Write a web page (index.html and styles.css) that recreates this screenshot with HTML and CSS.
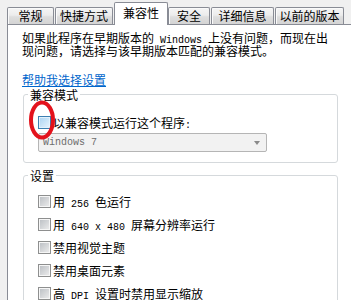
FILE: index.html
```html
<!DOCTYPE html>
<html lang="zh-CN">
<head>
<meta charset="utf-8">
<title>兼容性</title>
<link rel="stylesheet" href="styles.css">
</head>
<body>
<div class="window">
  <div class="tabs">
    <div class="tab t1">常规</div>
    <div class="tab t2">快捷方式</div>
    <div class="tab t3 active">兼容性</div>
    <div class="tab t4">安全</div>
    <div class="tab t5">详细信息</div>
    <div class="tab t6">以前的版本</div>
  </div>
  <div class="panel">
    <p class="intro">如果此程序在早期版本的<span class="lat"> Windows </span>上没有问题，而现在出<br>现问题，请选择与该早期版本匹配的兼容模式。</p>
    <p class="help-line"><a class="help" href="#">帮助我选择设置</a></p>
    <fieldset class="group g1">
      <legend>兼容模式</legend>
      <div class="row">
        <span class="cb hover"></span><span class="txt">以兼容模式运行这个程序<span class="lat">:</span></span>
        <svg class="ring" width="28" height="40" viewBox="0 0 28 40"><ellipse cx="14" cy="20" rx="11" ry="17.5" fill="none" stroke="#e3121c" stroke-width="4"/></svg>
      </div>
      <div class="select"><span class="lat">Windows 7</span><span class="arrow"></span></div>
    </fieldset>
    <fieldset class="group g2">
      <legend>设置</legend>
      <div class="rows">
        <div class="row"><span class="cb"></span><span class="txt">用<span class="lat"> 256 </span>色运行</span></div>
        <div class="row"><span class="cb"></span><span class="txt">用<span class="lat"> 640 x 480 </span>屏幕分辨率运行</span></div>
        <div class="row"><span class="cb"></span><span class="txt">禁用视觉主题</span></div>
        <div class="row"><span class="cb"></span><span class="txt">禁用桌面元素</span></div>
        <div class="row"><span class="cb"></span><span class="txt">高<span class="lat"> DPI </span>设置时禁用显示缩放</span></div>
      </div>
    </fieldset>
  </div>
</div>
</body>
</html>
```
FILE: styles.css
```css
html, body {
  margin: 0;
  height: 100%;
}
body {
  background: #f0f0f0;
  font: 12px/13px "Noto Sans CJK SC", "Noto Sans", sans-serif;
  color: #000;
  overflow: hidden;
}
.lat {
  font-family: "Liberation Mono", monospace;
  font-size: 10px;
  line-height: 0;
  white-space: pre;
}
.window {
  box-sizing: border-box;
  height: 100%;
  padding: 2px 0 0 7px;
  display: flex;
  flex-direction: column;
}
.tabs {
  display: flex;
  align-items: flex-end;
  height: 22px;
  flex: none;
}
.tab {
  box-sizing: border-box;
  height: 17px;
  border: 1px solid #898c95;
  border-bottom: 0;
  border-radius: 2px 2px 0 0;
  background: linear-gradient(#f5f5f5, #ececec 45%, #dedede 55%, #d4d4d4);
  box-shadow: inset 1px 1px 0 #fafafa;
  text-align: center;
  line-height: 15px;
  white-space: nowrap;
}
.tab + .tab { margin-left: 1px; }
.active + .tab { margin-left: 0; }
.t1 { width: 47px; }
.t2 { width: 58px; }
.t3 { width: 54px; }
.t4 { width: 42px; }
.t5 { width: 63px; }
.t6 { width: 69px; }
.tab.active {
  height: 23px;
  margin-bottom: -1px;
  background: #fff;
  box-shadow: none;
  line-height: 20px;
  position: relative;
  z-index: 1;
}
.panel {
  flex: 1;
  background: #fff;
  border-top: 1px solid #898c95;
  border-left: 1px solid #898c95;
}
.intro {
  margin: 0;
  padding: 6px 0 0 14px;
  white-space: nowrap;
}
.help-line {
  margin: 16px 0 0 14px;
}
.help {
  color: #0066cc;
  text-decoration: underline;
}
.group {
  box-sizing: border-box;
  width: 315px;
  margin: 2px 0 0 15px;
  border: 1px solid #d5d9dc;
  border-radius: 3px;
  padding: 15px 0 10px 4px;
  min-width: 0;
}
.group legend {
  padding: 0 2px;
  line-height: 13px;
}
.g2 {
  margin-top: 6px;
  padding-top: 13px;
  padding-bottom: 20px;
}
.row {
  position: relative;
  display: flex;
  align-items: center;
  height: 13px;
  margin-left: 10px;
  white-space: nowrap;
}
.rows {
  display: flex;
  flex-direction: column;
  gap: 10px;
}
.cb {
  flex: none;
  box-sizing: border-box;
  width: 13px;
  height: 13px;
  border: 1px solid #8e8f8f;
  background: linear-gradient(135deg, #b9bdc2, #eeeeee);
  box-shadow: inset 0 0 0 1px #f6f6f6;
}
.cb.hover {
  border-color: #3c7fb1;
  background: linear-gradient(135deg, #a9d2f1, #e8f4fd);
  box-shadow: inset 0 0 0 1px #e3f1fc;
}
.txt {
  margin-left: 2px;
  line-height: 13px;
}
.ring {
  position: absolute;
  left: -10px;
  top: -16px;
}
.select {
  box-sizing: border-box;
  width: 229px;
  height: 19px;
  margin: 4px 0 0 10px;
  border: 1px solid #b5b5b5;
  border-radius: 2px;
  background: #f2f2f2;
  color: #6d6d6d;
  display: flex;
  align-items: center;
  justify-content: space-between;
  padding: 0 6px 0 4px;
}
.select .lat {
  line-height: 13px;
}
.arrow {
  width: 0;
  height: 0;
  border-left: 3.5px solid transparent;
  border-right: 3.5px solid transparent;
  border-top: 4px solid #8a8a8a;
}
```
